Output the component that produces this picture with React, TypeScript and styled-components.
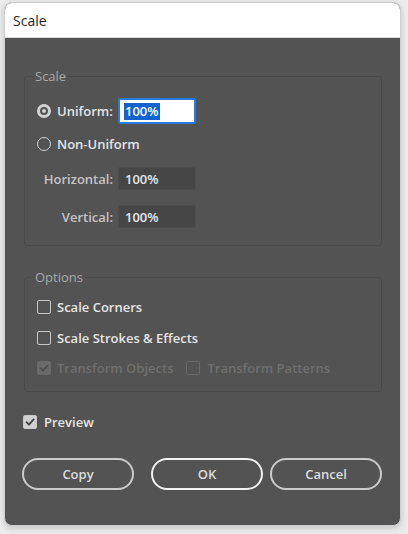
import React from "react";
import styled, { createGlobalStyle } from "styled-components";

const Global = createGlobalStyle`
  html, body { margin: 0; padding: 0; }
  body {
    background: #ececec;
    font-family: "Open Sans", "Noto Sans", "Liberation Sans", sans-serif;
    width: 408px;
    height: 534px;
    overflow: hidden;
  }
  * { box-sizing: border-box; }
`;

const Page = styled.div`
  padding: 2px 0 0 4px;
`;

const Window = styled.div`
  width: 397px;
  height: 524px;
  border-radius: 8px;
  overflow: hidden;
  background: #535353;
  border: 1px solid #cfcfcf;
  box-shadow: 0 2px 6px rgba(0, 0, 0, 0.18);
  display: flex;
  flex-direction: column;
`;

const TitleBar = styled.div`
  height: 35px;
  flex: none;
  background: #ffffff;
  border-bottom: 1px solid #d6d6d6;
  display: flex;
  align-items: center;
  padding-left: 8px;
  font-size: 14px;
  color: #1f1f1f;
`;

const Body = styled.div`
  padding: 29px 18px 0 19px;
  display: flex;
  flex-direction: column;
`;

const Group = styled.fieldset<{ $mt?: number; $pt: number; $pb: number }>`
  margin: ${(p) => p.$mt ?? 0}px 0 0 0;
  padding: ${(p) => p.$pt}px 12px ${(p) => p.$pb}px 12px;
  border: 1px solid #4a4a4a;
  border-radius: 3px;
  min-width: 0;
`;

const Legend = styled.legend`
  margin-left: -3px;
  padding: 0 1px;
  font-size: 13px;
  line-height: 18px;
  color: #a9a9a9;
`;

const Row = styled.div<{ $mt?: number; $h: number }>`
  display: flex;
  align-items: center;
  height: ${(p) => p.$h}px;
  margin-top: ${(p) => p.$mt ?? 0}px;
`;

const LabelCell = styled.div<{ $right?: boolean }>`
  width: 76px;
  flex: none;
  display: flex;
  align-items: center;
  justify-content: ${(p) => (p.$right ? "flex-end" : "flex-start")};
  margin-right: 5px;
`;

const Text = styled.span<{ $tone?: "bright" | "dim" | "off"; $ml?: number }>`
  font-size: 13px;
  font-weight: 600;
  white-space: nowrap;
  margin-left: ${(p) => p.$ml ?? 0}px;
  color: ${(p) =>
    p.$tone === "dim" ? "#c4c4c4" : p.$tone === "off" ? "#6f6f6f" : "#e4e4e4"};
`;

const Radio = styled.span<{ $on?: boolean }>`
  width: 14px;
  height: 14px;
  flex: none;
  border-radius: 50%;
  border: ${(p) => (p.$on ? "3px" : "1.5px")} solid #d2d2d2;
  display: flex;
  align-items: center;
  justify-content: center;
  &::after {
    content: "";
    width: 4px;
    height: 4px;
    border-radius: 50%;
    background: ${(p) => (p.$on ? "#d2d2d2" : "transparent")};
  }
`;

const Box = styled.span<{ $checked?: boolean; $off?: boolean; $ml?: number }>`
  width: 14px;
  height: 14px;
  flex: none;
  margin-left: ${(p) => p.$ml ?? 0}px;
  border-radius: 2px;
  border: 1.5px solid ${(p) => (p.$off ? "#6a6a6a" : "#c8c8c8")};
  background: ${(p) => (p.$checked ? (p.$off ? "#6a6a6a" : "#d0d0d0") : "transparent")};
  display: flex;
  align-items: center;
  justify-content: center;
`;

const Field = styled.div<{ $active?: boolean }>`
  width: 78px;
  height: ${(p) => (p.$active ? 26 : 23)}px;
  flex: none;
  border-radius: 2px;
  display: flex;
  align-items: center;
  padding-left: ${(p) => (p.$active ? 4 : 6)}px;
  font-size: 13px;
  font-weight: 600;
  background: ${(p) => (p.$active ? "#ffffff" : "#464646")};
  border: ${(p) => (p.$active ? "2px solid #2a7be0" : "1px solid #4c4c4c")};
  color: #e8e8e8;
`;

const Selected = styled.span`
  background: #1163cf;
  color: #ffffff;
  padding: 0 1px;
  line-height: 17px;
`;

const Buttons = styled.div`
  display: flex;
  margin-top: 26px;
  margin-left: -2px;
`;

const Button = styled.button<{ $primary?: boolean; $ml?: number }>`
  width: 113px;
  height: 32px;
  margin-left: ${(p) => p.$ml ?? 0}px;
  border-radius: 16px;
  background: transparent;
  border: ${(p) => (p.$primary ? "2.5px solid #f2f2f2" : "2px solid #cbcbcb")};
  color: #dcdcdc;
  font-family: inherit;
  font-size: 13px;
  font-weight: 600;
  padding: 0;
`;

const Check = ({ color }: { color: string }) => (
  <svg width="10" height="10" viewBox="0 0 10 10">
    <path d="M1.5 5.2 L4 7.6 L8.6 2.4" fill="none" stroke={color} strokeWidth="1.8" strokeLinecap="round" strokeLinejoin="round" />
  </svg>
);

export default function App() {
  return (
    <>
      <Global />
      <Page>
        <Window>
          <TitleBar>Scale</TitleBar>
          <Body>
            <Group $pt={13} $pb={16}>
              <Legend>Scale</Legend>
              <Row $h={26}>
                <LabelCell>
                  <Radio $on />
                  <Text $ml={6}>Uniform:</Text>
                </LabelCell>
                <Field $active>
                  <Selected>100%</Selected>
                </Field>
              </Row>
              <Row $h={26} $mt={7}>
                <Radio />
                <Text $ml={6}>Non-Uniform</Text>
              </Row>
              <Row $h={25} $mt={9}>
                <LabelCell $right>
                  <Text $tone="dim">Horizontal:</Text>
                </LabelCell>
                <Field>100%</Field>
              </Row>
              <Row $h={25} $mt={13}>
                <LabelCell $right>
                  <Text $tone="dim">Vertical:</Text>
                </LabelCell>
                <Field>100%</Field>
              </Row>
            </Group>
            <Group $mt={22} $pt={10} $pb={12}>
              <Legend>Options</Legend>
              <Row $h={22}>
                <Box />
                <Text $ml={6}>Scale Corners</Text>
              </Row>
              <Row $h={22} $mt={9}>
                <Box />
                <Text $ml={6}>Scale Strokes &amp; Effects</Text>
              </Row>
              <Row $h={22} $mt={8}>
                <Box $checked $off>
                  <Check color="#4e4e4e" />
                </Box>
                <Text $ml={6} $tone="off">Transform Objects</Text>
                <Box $off $ml={13} />
                <Text $ml={7} $tone="off">Transform Patterns</Text>
              </Row>
            </Group>
            <Row $h={20} $mt={20}>
              <Box $checked $ml={-1}>
                <Check color="#444444" />
              </Box>
              <Text $ml={7}>Preview</Text>
            </Row>
            <Buttons>
              <Button>Copy</Button>
              <Button $primary $ml={17}>OK</Button>
              <Button $ml={7}>Cancel</Button>
            </Buttons>
          </Body>
        </Window>
      </Page>
    </>
  );
}
